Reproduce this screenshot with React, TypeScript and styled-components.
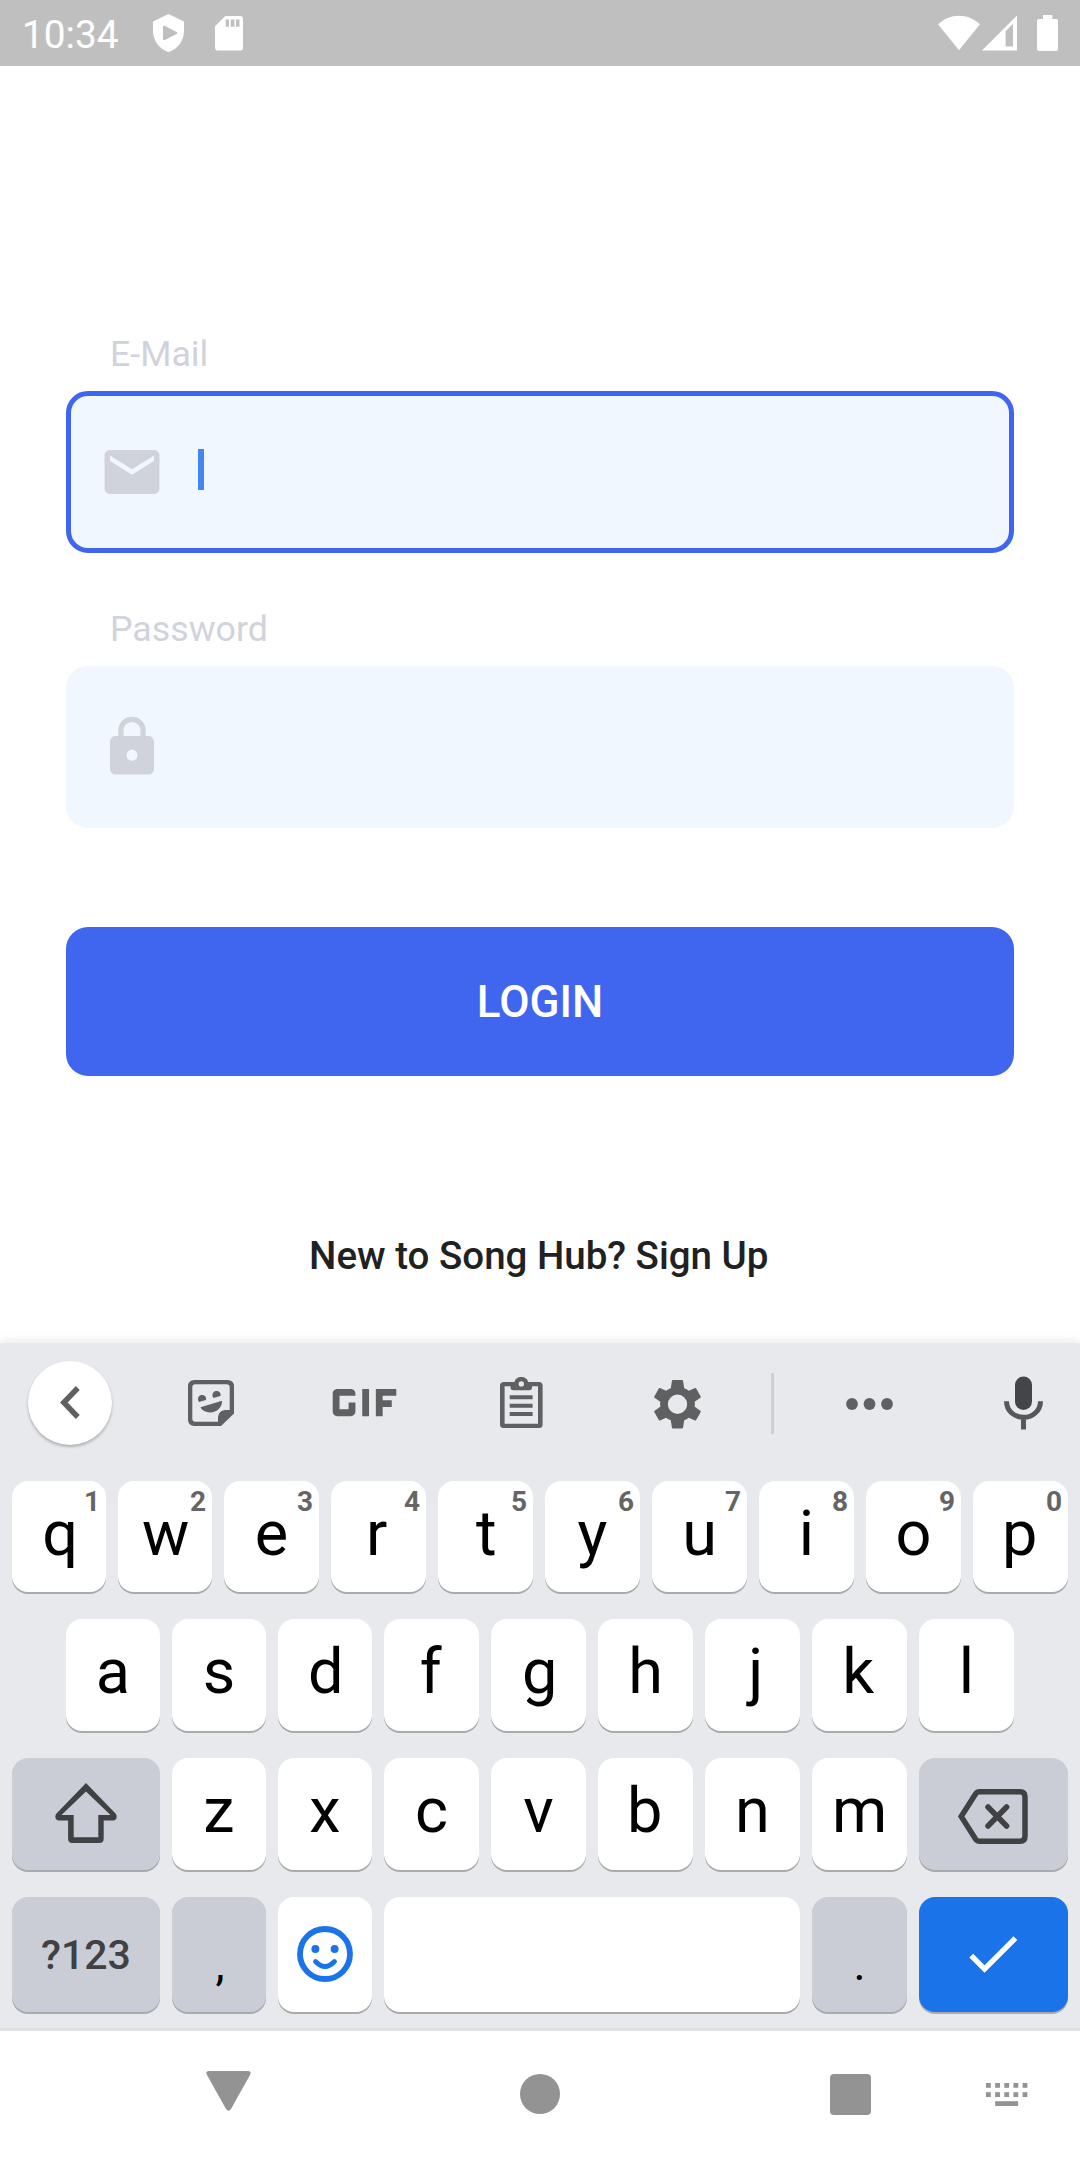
import React from "react";
import styled, { createGlobalStyle } from "styled-components";
import { MdCheck, MdEmail, MdGif, MdLock } from "react-icons/md";

const GlobalStyle = createGlobalStyle`
  *, *::before, *::after { box-sizing: border-box; }
  body { margin: 0; background: #ffffff; }
  svg { display: block; flex: none; }
`;

const Screen = styled.div`
  width: 1080px;
  height: 2160px;
  display: flex;
  flex-direction: column;
  overflow: hidden;
  background: #ffffff;
  font-family: Roboto, "Liberation Sans", sans-serif;
`;

/* ---------- status bar ---------- */

const StatusBar = styled.header`
  height: 66px;
  flex: none;
  display: flex;
  align-items: flex-start;
  padding: 14px 22px 0;
  background: #bfbfbf;
  color: #ffffff;
`;

const Clock = styled.time`
  width: 131px;
  font-size: 38.8px;
  line-height: 42px;
`;

const StatusIcons = styled.div<{ $gap: number }>`
  display: flex;
  align-items: center;
  gap: ${(p) => p.$gap}px;
  height: 38px;
`;

const StatusSpacer = styled.div`
  flex: 1;
`;

const BatterySlot = styled.span`
  display: flex;
  padding-left: 17.5px;
`;

/* ---------- login form ---------- */

const Form = styled.main`
  height: 1277px;
  flex: none;
  display: flex;
  flex-direction: column;
  padding: 266.8px 66px 0;
`;

const Label = styled.label<{ $top?: number }>`
  margin: ${(p) => p.$top ?? 0}px 0 16px;
  padding-left: 44px;
  font-size: 35.75px;
  line-height: 42px;
  color: #d1d3dc;
`;

const Field = styled.div<{ $focused?: boolean }>`
  height: 162.5px;
  display: flex;
  align-items: center;
  padding-left: 27.5px;
  border: 5.5px solid ${(p) => (p.$focused ? "#4066f0" : "#f0f7ff")};
  border-radius: 22px;
  background: #f0f7ff;
  color: #d1d3dc;
`;

const Caret = styled.span`
  width: 6px;
  height: 41px;
  margin: -5.5px 0 0 33px;
  background: #4285f4;
`;

const LoginButton = styled.button`
  height: 149px;
  margin: 98.7px 0 0;
  padding: 1px 0 0;
  border: 0;
  border-radius: 22px;
  background: #4066f0;
  color: #ffffff;
  font: 500 44px/52px Roboto, "Liberation Sans", sans-serif;
`;

const SignUp = styled.a`
  margin-top: 156.7px;
  padding-right: 2.5px;
  text-align: center;
  font-size: 38.5px;
  font-weight: 500;
  line-height: 46px;
  color: #212121;
`;

/* ---------- keyboard ---------- */

const Keyboard = styled.section`
  height: 688px;
  flex: none;
  display: flex;
  flex-direction: column;
  border-bottom: 3px solid #dfe0e0;
  background: #e8e9ed;
  box-shadow: 0 0 12px rgba(0, 0, 0, 0.12);
`;

const Toolbar = styled.div`
  height: 119px;
  flex: none;
  margin-bottom: 19px;
  display: grid;
  grid-template-columns: 139px 144px 164px 149px 163px 26px 169px 14px 111px;
  align-items: center;
  justify-items: center;
  color: #5f6062;
`;

const Tool = styled.button<{ $shift?: number; $last?: boolean }>`
  display: flex;
  padding: 0;
  border: 0;
  margin-top: ${(p) => p.$shift ?? 0}px;
  grid-column: ${(p) => (p.$last ? 9 : "auto")};
  background: none;
  color: inherit;
`;

const BackButton = styled(Tool)`
  width: 84px;
  height: 84px;
  align-items: center;
  justify-content: center;
  border-radius: 50%;
  background: #ffffff;
  box-shadow: 0 2px 3px rgba(0, 0, 0, 0.26);
`;

const GifTool = styled(Tool)`
  margin-right: 1.5px;
`;

const Divider = styled.div`
  width: 3px;
  height: 61px;
  margin-top: 2px;
  background: #cdcfd2;
`;

const Row = styled.div<{ $columns: string; $height: number; $inset?: number }>`
  display: grid;
  flex: none;
  grid-template-columns: ${(p) => p.$columns};
  grid-template-rows: ${(p) => p.$height}px;
  column-gap: 12px;
  margin: 0 ${(p) => p.$inset ?? 12}px;

  & + & {
    margin-top: 27px;
  }
`;

type Tone = "light" | "dim" | "accent";
const tones: Record<Tone, string> = {
  light: "#ffffff",
  dim: "#cbcdd6",
  accent: "#1a73e8",
};

const Key = styled.button<{ $tone?: Tone }>`
  position: relative;
  display: flex;
  align-items: flex-start;
  justify-content: center;
  padding: 0;
  border: 0;
  border-radius: 16px;
  background: ${(p) => tones[p.$tone ?? "light"]};
  box-shadow: 0 2px 0 #a9aaac;
  color: #000000;
  font: 400 63px/105px Roboto, "Liberation Sans", sans-serif;
`;

const Letter = styled.span<{ $nudge: number }>`
  transform: translateX(${(p) => p.$nudge}px);
`;

const SymbolsLabel = styled.span`
  margin-top: 2px;
  font-size: 41px;
  font-weight: 500;
  line-height: 113px;
  color: #404143;
`;

const Punctuation = styled.span<{ $left?: number }>`
  margin: 37px 0 0 ${(p) => p.$left ?? 0}px;
  font-size: 46px;
  line-height: 60px;
`;

const Hint = styled.span`
  position: absolute;
  top: 4px;
  right: 6px;
  font-size: 28px;
  font-weight: 700;
  line-height: 33px;
  color: #656565;
`;

const KeyIcon = styled.span<{ $top: number; $right?: number; $color: string }>`
  display: flex;
  margin: ${(p) => p.$top}px ${(p) => p.$right ?? 0}px 0 0;
  color: ${(p) => p.$color};
`;

/* ---------- navigation bar ---------- */

const NavBar = styled.nav`
  flex: 1;
  display: flex;
  align-items: flex-start;
  padding: 40px 52px 0 206px;
  background: #ffffff;
  color: #939393;
`;

const NavButton = styled.button<{ $left?: number; $top?: number }>`
  display: flex;
  margin: ${(p) => p.$top ?? 0}px 0 0 ${(p) => p.$left ?? 0}px;
  padding: 0;
  border: 0;
  background: none;
  color: inherit;
`;

/* ---------- drawings ---------- */

const ShieldIcon = () => (
  <svg width="31" height="38" viewBox="0 0 31 38">
    <path fill="#fff" d="M15.5 0 31 7.5V17C31 26.5 24.5 35.5 15.5 38 6.5 35.5 0 26.5 0 17V7.5Z" />
    <path fill="#bfbfbf" d="M10 12.6Q10 11.6 12 11.9L24 18.2Q24.8 19 24 19.8L12 26Q10 26.4 10 25.4Z" />
  </svg>
);

const SdCardIcon = () => (
  <svg width="28" height="35" viewBox="0 0 28 35">
    <path
      fill="#fff"
      fillRule="evenodd"
      d="M10.3 0H25Q28 0 28 3V31.5Q28 34.6 25 34.6H3.2Q0 34.6 0 31.5V10.2ZM10.7 3.4V10.8H13.9V3.4ZM15.8 3.4V10.8H19.4V3.4ZM21 3.4V10.8H24.5V3.4Z"
    />
  </svg>
);

const WifiIcon = () => (
  <svg width="42" height="36" viewBox="0 0 42 36">
    <path fill="#fff" d="M21 35.3 0 9.3C5.8 3.8 13 .7 21 .7S36.2 3.8 42 9.3Z" />
  </svg>
);

const SignalIcon = () => (
  <svg width="35" height="36" viewBox="0 0 35 36">
    <path fill="#fff" fillRule="evenodd" d="M35 .5V35.5H0ZM31 8.7 23.6 16.2V31.6H31Z" />
  </svg>
);

const BatteryIcon = () => (
  <svg width="21" height="36" viewBox="0 0 21 36">
    <path fill="#fff" d="M6 0H15.3V4H19Q21 4 21 6V34Q21 36 19 36H2Q0 36 0 34V6Q0 4 2 4H6Z" />
  </svg>
);

const ChevronIcon = () => (
  <svg width="20" height="33" viewBox="0 0 20 33">
    <path fill="none" stroke="currentColor" strokeWidth="5.4" d="M17.8 2 3.8 16.5 17.8 31" />
  </svg>
);

const StickerIcon = () => (
  <svg width="46" height="46" viewBox="0 0 46 46" fill="currentColor">
    <path
      fillRule="evenodd"
      d="M6.5 0H39.5Q46 0 46 6.5V33.5L33 46H6.5Q0 46 0 39.5V6.5Q0 0 6.5 0ZM7.5 4.3Q4.3 4.3 4.3 7.5V38.5Q4.3 41.7 7.5 41.7H30V37Q30.5 31 37 30H41.7V7.5Q41.7 4.3 38.5 4.3Z"
    />
    <path d="M11 22C9 19.5 10 15.5 13.5 15 17 14.7 18.8 17.5 17.8 20Z" />
    <path d="M25.5 17.9C23.5 15.4 24.5 11.4 28 10.9 31.5 10.6 33.3 13.4 32.3 15.9Z" />
    <path d="M12.5 27.3 34 20.7C34.5 26 30 32.4 22 32.4 17.5 32.4 14 30.5 12.5 27.3Z" />
  </svg>
);

const ClipboardIcon = () => (
  <svg width="43" height="51" viewBox="0 0 43 51" fill="currentColor">
    <path
      fillRule="evenodd"
      d="M4 5H14.5C15 2 17.8 0 21.3 0S27.6 2 28.2 5H39Q42.6 5 42.6 8.6V47.5Q42.6 51 39 51H3.6Q0 51 0 47.5V8.6Q0 5 4 5ZM4.6 9.3V46.7H38V9.3H32V10.5Q32 13.3 29.2 13.3H13.4Q10.5 13.3 10.5 10.5V9.3ZM21.3 4.2A2.7 2.7 0 1 0 21.3 9.6 2.7 2.7 0 0 0 21.3 4.2Z"
    />
    <path d="M9.7 18.3H32.6V22.3H9.7ZM9.7 26.7H32.6V30.7H9.7ZM9.7 35H32.6V39H9.7Z" />
  </svg>
);

const GearIcon = () => (
  <svg width="47" height="48.5" viewBox="0 0 47 48.5">
    <path
      fill="currentColor"
      fillRule="evenodd"
      d="M19 0H28Q28.9 0 29.1.9L30.2 8.2Q32.6 9 34.9 10.8L41 8Q41.7 7.7 42.2 8.5L46.7 16.4Q47 17.2 46.4 17.7L40.7 21.8Q41.1 24.25 40.7 26.7L46.4 30.8Q47 31.3 46.7 32.1L42.2 40Q41.7 40.8 41 40.5L34.9 37.7Q32.6 39.5 30.2 40.3L29.1 47.6Q28.9 48.5 28 48.5H19Q18.1 48.5 17.9 47.6L16.8 40.3Q14.4 39.5 12.1 37.7L6 40.5Q5.3 40.8 4.8 40L.3 32.1Q0 31.3.6 30.8L6.3 26.7Q5.9 24.25 6.3 21.8L.6 17.7Q0 17.2.3 16.4L4.8 8.5Q5.3 7.7 6 8L12.1 10.8Q14.4 9 16.8 8.2L17.9.9Q18.1 0 19 0ZM23.5 14.6A9.65 9.65 0 1 0 23.5 33.9 9.65 9.65 0 0 0 23.5 14.6Z"
    />
  </svg>
);

const MoreIcon = () => (
  <svg width="47" height="12" viewBox="0 0 47 12" fill="currentColor">
    <circle cx="6" cy="6" r="5.9" />
    <circle cx="23.5" cy="6" r="5.9" />
    <circle cx="41" cy="6" r="5.9" />
  </svg>
);

const MicIcon = () => (
  <svg width="39" height="54" viewBox="0 0 39 54">
    <rect x="11" y="0.5" width="17" height="33.5" rx="8.5" fill="#444547" />
    <path
      fill="none"
      stroke="#55575a"
      strokeWidth="5"
      d="M2.5 25.3C2.5 34.5 10 41.3 19.5 41.3S36.5 34.5 36.5 25.3M19.5 41V53.5"
    />
  </svg>
);

const ShiftIcon = () => (
  <svg width="62" height="60" viewBox="0 0 62 60">
    <path
      fill="currentColor"
      fillRule="evenodd"
      d="M31 0 60.5 30.5C63 33.5 61.3 37.5 58 37.5H48.7V55.5Q48.7 60 44.2 60H17.5Q13.1 60 13.1 55.5V37.5H4C.7 37.5-1 33.5 1.5 30.5ZM31 8.4 6.5 32H18.7V54.3H43.3V32H55.5Z"
    />
  </svg>
);

const BackspaceIcon = () => (
  <svg width="70" height="55" viewBox="0 0 70 55" fill="none" stroke="currentColor" strokeWidth="5.5">
    <path d="M3.2 27.5 17.5 5Q19 2.8 21.5 2.8H62Q67 2.8 67 7.8V47.2Q67 52.2 62 52.2H21.5Q19 52.2 17.5 50Z" />
    <path strokeLinecap="round" d="M30 18 48.6 37M48.6 18 30 37" />
  </svg>
);

const SmileIcon = () => (
  <svg width="56" height="56" viewBox="0 0 56 56">
    <circle cx="28" cy="28" r="25" fill="none" stroke="currentColor" strokeWidth="5.8" />
    <circle cx="18.4" cy="23" r="4" fill="currentColor" />
    <circle cx="37.6" cy="23" r="4" fill="currentColor" />
    <path d="M18.5 35.5Q28 45.5 37.5 35.5" fill="none" stroke="currentColor" strokeWidth="4.8" strokeLinecap="round" />
  </svg>
);

const BackTriangle = () => (
  <svg width="45" height="40" viewBox="0 0 45 40">
    <path fill="currentColor" d="M3 0H42Q46 0 44 4L25 38Q22.5 41.5 20 38L1 4Q-1 0 3 0Z" />
  </svg>
);

const HomeCircle = () => (
  <svg width="40" height="40" viewBox="0 0 40 40">
    <circle cx="20" cy="20" r="20" fill="currentColor" />
  </svg>
);

const RecentsSquare = () => (
  <svg width="41" height="41" viewBox="0 0 41 41">
    <rect width="41" height="41" rx="4" fill="currentColor" />
  </svg>
);

const KeyboardSwitchIcon = () => (
  <svg width="42" height="23" viewBox="0 0 42 23" fill="currentColor">
    {[0, 1, 2, 3, 4].map((i) => (
      <React.Fragment key={i}>
        <rect x={i * 9.15} y="0" width="4.8" height="4.8" />
        <rect x={i * 9.15} y="9.2" width="4.8" height="4.8" />
      </React.Fragment>
    ))}
    <rect x="9.15" y="18.2" width="23" height="4.8" />
  </svg>
);

/* ---------- app ---------- */

const topRow = [..."qwertyuiop"];
const middleRow = [..."asdfghjkl"];
const bottomRow = [..."zxcvbnm"];

/* Side bearings are uneven, so these letters are centred by their ink. */
const nudges: Record<string, number> = {
  q: 1.2,
  w: 0.6,
  r: -1.7,
  t: 0.9,
  p: -0.7,
  d: 0.7,
  f: -0.8,
  g: 1.2,
  j: 3.4,
  k: -1.4,
  b: -0.7,
};

const LetterKey = ({ letter, hint }: { letter: string; hint?: number }) => (
  <Key>
    <Letter $nudge={nudges[letter] ?? 0}>{letter}</Letter>
    {hint !== undefined && <Hint>{hint}</Hint>}
  </Key>
);

export default function App() {
  return (
    <Screen>
      <GlobalStyle />
      <StatusBar>
        <Clock>10:34</Clock>
        <StatusIcons $gap={31}>
          <ShieldIcon />
          <SdCardIcon />
        </StatusIcons>
        <StatusSpacer />
        <StatusIcons $gap={2.5}>
          <WifiIcon />
          <SignalIcon />
          <BatterySlot>
            <BatteryIcon />
          </BatterySlot>
        </StatusIcons>
      </StatusBar>

      <Form>
        <Label>E-Mail</Label>
        <Field $focused>
          <MdEmail size={66} />
          <Caret />
        </Field>
        <Label $top={54.5}>Password</Label>
        <Field>
          <MdLock size={66} />
        </Field>
        <LoginButton>LOGIN</LoginButton>
        <SignUp>New to Song Hub? Sign Up</SignUp>
      </Form>

      <Keyboard>
        <Toolbar>
          <BackButton aria-label="Back">
            <ChevronIcon />
          </BackButton>
          <Tool aria-label="Stickers">
            <StickerIcon />
          </Tool>
          <GifTool aria-label="GIF">
            <MdGif size={109} />
          </GifTool>
          <Tool aria-label="Clipboard" $shift={-1}>
            <ClipboardIcon />
          </Tool>
          <Tool aria-label="Settings" $shift={4}>
            <GearIcon />
          </Tool>
          <Divider />
          <Tool aria-label="More" $shift={2}>
            <MoreIcon />
          </Tool>
          <Tool aria-label="Voice" $last>
            <MicIcon />
          </Tool>
        </Toolbar>

        <Row $columns="repeat(2, 94px) repeat(8, 95px)" $height={111}>
          {topRow.map((letter, i) => (
            <LetterKey key={letter} letter={letter} hint={(i + 1) % 10} />
          ))}
        </Row>
        <Row $columns="repeat(3, 94px) repeat(6, 95px)" $height={112} $inset={66}>
          {middleRow.map((letter) => (
            <LetterKey key={letter} letter={letter} />
          ))}
        </Row>
        <Row $columns="148px repeat(2, 94px) repeat(5, 95px) 149px" $height={112}>
          <Key $tone="dim" aria-label="Shift">
            <KeyIcon $top={25} $color="#404143">
              <ShiftIcon />
            </KeyIcon>
          </Key>
          {bottomRow.map((letter) => (
            <LetterKey key={letter} letter={letter} />
          ))}
          <Key $tone="dim" aria-label="Backspace">
            <KeyIcon $top={31} $right={2} $color="#404143">
              <BackspaceIcon />
            </KeyIcon>
          </Key>
        </Row>
        <Row $columns="148px 94px 94px 416px 95px 149px" $height={115}>
          <Key $tone="dim">
            <SymbolsLabel>?123</SymbolsLabel>
          </Key>
          <Key $tone="dim">
            <Punctuation $left={2}>,</Punctuation>
          </Key>
          <Key aria-label="Emoji">
            <KeyIcon $top={29} $color="#1a73e8">
              <SmileIcon />
            </KeyIcon>
          </Key>
          <Key aria-label="Space" />
          <Key $tone="dim">
            <Punctuation>.</Punctuation>
          </Key>
          <Key $tone="accent" aria-label="Done">
            <KeyIcon $top={24} $right={1.5} $color="#ffffff">
              <MdCheck size={65.5} />
            </KeyIcon>
          </Key>
        </Row>
      </Keyboard>

      <NavBar>
        <NavButton aria-label="Back">
          <BackTriangle />
        </NavButton>
        <NavButton aria-label="Home" $left={269} $top={3}>
          <HomeCircle />
        </NavButton>
        <NavButton aria-label="Recents" $left={270} $top={3}>
          <RecentsSquare />
        </NavButton>
        <NavButton aria-label="Switch keyboard" $left={115} $top={12}>
          <KeyboardSwitchIcon />
        </NavButton>
      </NavBar>
    </Screen>
  );
}
